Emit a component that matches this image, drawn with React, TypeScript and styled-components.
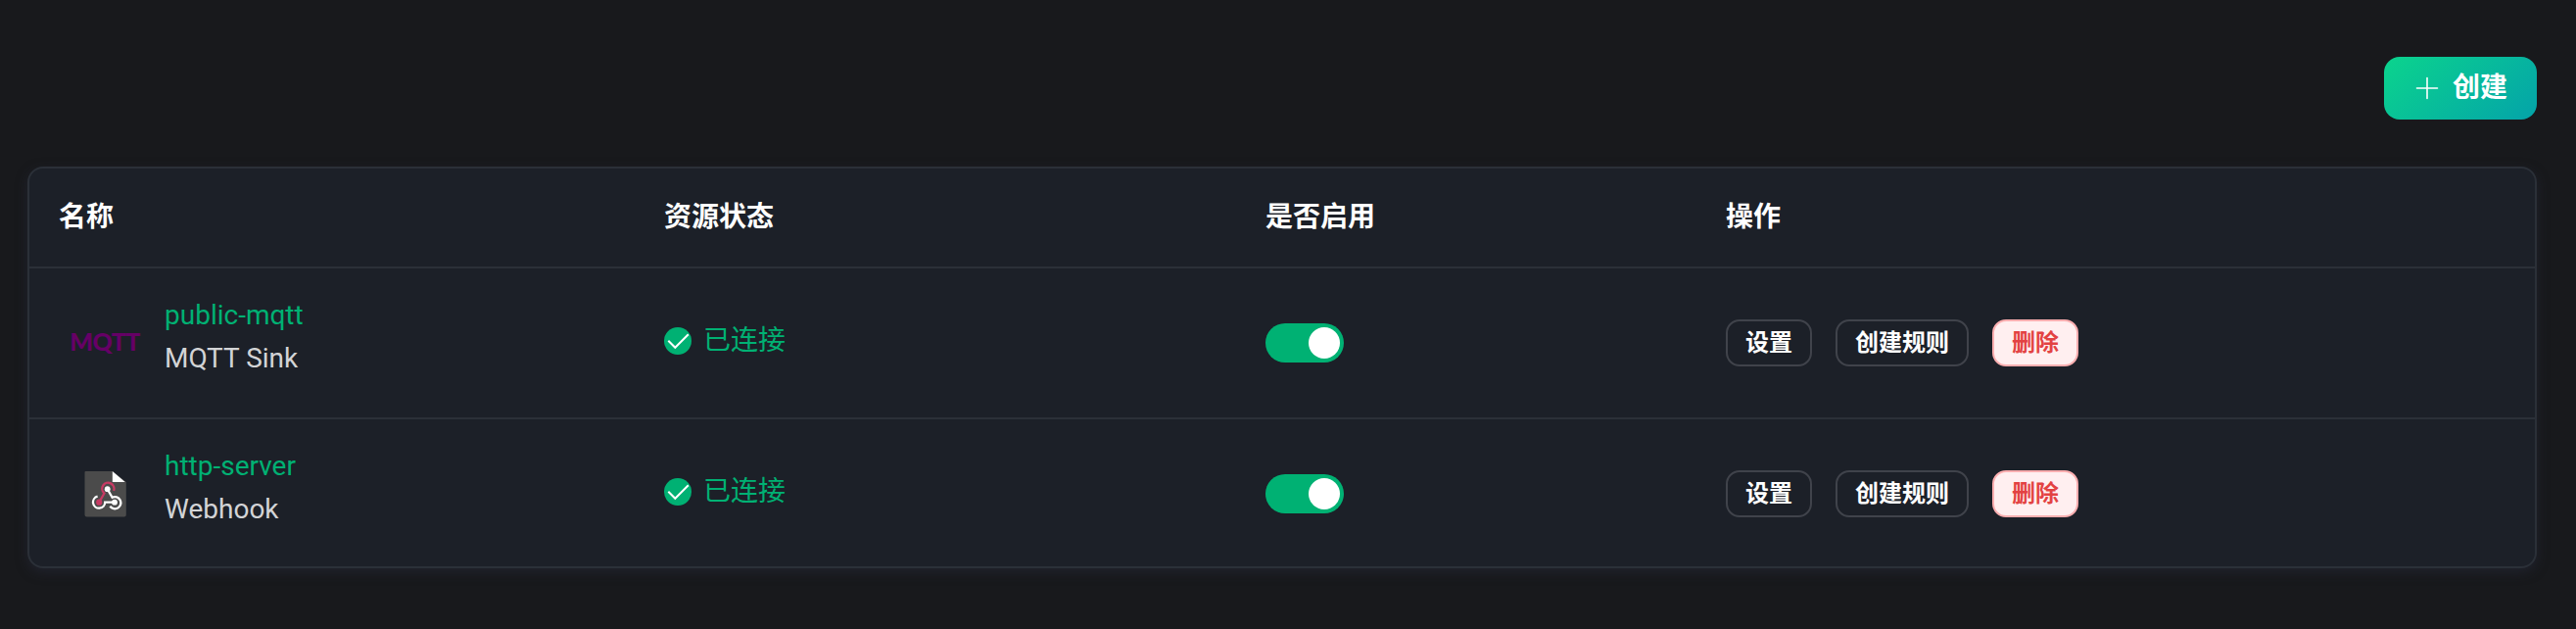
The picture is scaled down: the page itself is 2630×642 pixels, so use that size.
import React from 'react';
import styled, { createGlobalStyle, css } from 'styled-components';

const GlobalStyle = createGlobalStyle`
  * { box-sizing: border-box; }
  body {
    margin: 0;
    background: #18191c;
    color: #d3d4d6;
    font-family: Roboto, 'Noto Sans CJK SC', sans-serif;
    font-size: 28px;
  }
`;

const Page = styled.main`
  min-height: 642px;
  padding: 58px 40px 62px 28px;
  display: flex;
  flex-direction: column;
  gap: 48px;
`;

const Toolbar = styled.div`
  display: flex;
  justify-content: flex-end;
`;

const CreateButton = styled.button`
  display: flex;
  align-items: center;
  gap: 14px;
  width: 156px;
  height: 64px;
  padding: 0 0 0 32px;
  border: 0;
  border-radius: 16px;
  background: linear-gradient(137deg, #0bd48d 0%, #04a3a9 100%);
  color: #fff;
  font: 700 28px/40px Roboto, 'Noto Sans CJK SC', sans-serif;
`;

const Card = styled.section`
  height: 410px;
  border: 2px solid #2b3038;
  border-radius: 16px;
  background: #1c2028;
  box-shadow: 0 4px 12px rgba(40, 44, 62, 0.5);
`;

const Row = styled.div<{ $head?: boolean }>`
  display: grid;
  grid-template-columns: 618px 614px 470px 1fr;
  align-items: center;
  height: ${(p) => (p.$head ? 102 : 154)}px;
  padding-left: 30px;
  border-bottom: 2px solid #2b3038;
  ${(p) =>
    p.$head &&
    css`
      color: #fff;
      font-weight: 700;
      line-height: 40px;
    `}
  &:last-child {
    height: 150px;
    padding-top: 2px;
    border-bottom: 0;
  }
`;

const NameCell = styled.div`
  display: flex;
  align-items: center;
`;

const LogoBox = styled.div`
  display: flex;
  align-items: center;
  justify-content: center;
  width: 96px;
  height: 96px;
  margin-right: 12px;
`;

const MqttLogo = styled.span`
  padding: 0 2px 4px 0;
  color: #660066;
  font: 900 25px/28px Lato, sans-serif;
  letter-spacing: -0.5px;
`;

const Names = styled.div`
  display: flex;
  flex-direction: column;
  line-height: 44px;
  padding-bottom: 12px;
`;

const ResourceLink = styled.a`
  color: #00b173;
`;

const Status = styled.div`
  display: flex;
  align-items: center;
  gap: 12px;
  padding-bottom: 4px;
  color: #00b173;
  line-height: 40px;
`;

const Switch = styled.div`
  display: flex;
  justify-content: flex-end;
  width: 80px;
  height: 40px;
  padding: 4px;
  border-radius: 20px;
  background: #00b173;
`;

const Knob = styled.span`
  width: 32px;
  height: 32px;
  border-radius: 50%;
  background: #fff;
`;

const Actions = styled.div`
  display: flex;
  gap: 24px;
`;

const ActionButton = styled.button<{ $danger?: boolean }>`
  height: 48px;
  padding: 0 18px;
  border: 2px solid ${(p) => (p.$danger ? '#fbaeb0' : '#40434b')};
  border-radius: 14px;
  background: ${(p) => (p.$danger ? '#ffeff0' : 'transparent')};
  color: ${(p) => (p.$danger ? '#e34242' : '#fff')};
  font: 700 24px/36px Roboto, 'Noto Sans CJK SC', sans-serif;
`;

const PlusIcon = () => (
  <svg width="24" height="24" viewBox="0 0 24 24" fill="none" stroke="#fff" strokeWidth="1.6" strokeLinecap="round">
    <path d="M12 1.5v21M1.5 12h21" />
  </svg>
);

const CheckIcon = () => (
  <svg width="28" height="28" viewBox="0 0 28 28" fill="none">
    <circle cx="14" cy="14" r="14" fill="#00b173" />
    <path d="M4.3 13.8l7 7L24.8 7.3" stroke="#fff" strokeWidth="2" />
  </svg>
);

const WebhookLogo = () => (
  <svg width="44" height="48" viewBox="0 0 44 48" fill="none">
    <path d="M1.5 1H29l13.8 11v33.5a2 2 0 0 1-2 2H2.5a2 2 0 0 1-2-2V2a1 1 0 0 1 1-1z" fill="#4b4b4b" />
    <path d="M28.8 1v11h12.9z" fill="#fff" />
    <path d="M30.1 20.9A6.1 6.1 0 1 0 20.4 23.5L15.2 32.7" stroke="#c73a63" strokeWidth="2.3" />
    <circle cx="15.2" cy="32.7" r="3.1" fill="#c73a63" />
    <path d="M13.6 26.7A6.1 6.1 0 1 0 21.2 32.6H31" stroke="#fff" strokeWidth="2.3" />
    <circle cx="31" cy="32.7" r="2.9" fill="#fff" />
    <path d="M23.7 19.2L28.6 27.7A6.1 6.1 0 1 1 26.3 36.8" stroke="#fff" strokeWidth="2.3" />
    <circle cx="23.7" cy="19.2" r="2.9" fill="#fff" />
  </svg>
);

const resources = [
  { name: 'public-mqtt', type: 'MQTT Sink', logo: <MqttLogo>MQTT</MqttLogo> },
  { name: 'http-server', type: 'Webhook', logo: <WebhookLogo /> },
];

export default function App() {
  return (
    <>
      <GlobalStyle />
      <Page>
        <Toolbar>
          <CreateButton>
            <PlusIcon />
            <span>创建</span>
          </CreateButton>
        </Toolbar>
        <Card>
          <Row $head>
            <span>名称</span>
            <span>资源状态</span>
            <span>是否启用</span>
            <span>操作</span>
          </Row>
          {resources.map((r) => (
            <Row key={r.name}>
              <NameCell>
                <LogoBox>{r.logo}</LogoBox>
                <Names>
                  <ResourceLink>{r.name}</ResourceLink>
                  <span>{r.type}</span>
                </Names>
              </NameCell>
              <Status>
                <CheckIcon />
                <span>已连接</span>
              </Status>
              <Switch role="switch" aria-checked="true">
                <Knob />
              </Switch>
              <Actions>
                <ActionButton>设置</ActionButton>
                <ActionButton>创建规则</ActionButton>
                <ActionButton $danger>删除</ActionButton>
              </Actions>
            </Row>
          ))}
        </Card>
      </Page>
    </>
  );
}
